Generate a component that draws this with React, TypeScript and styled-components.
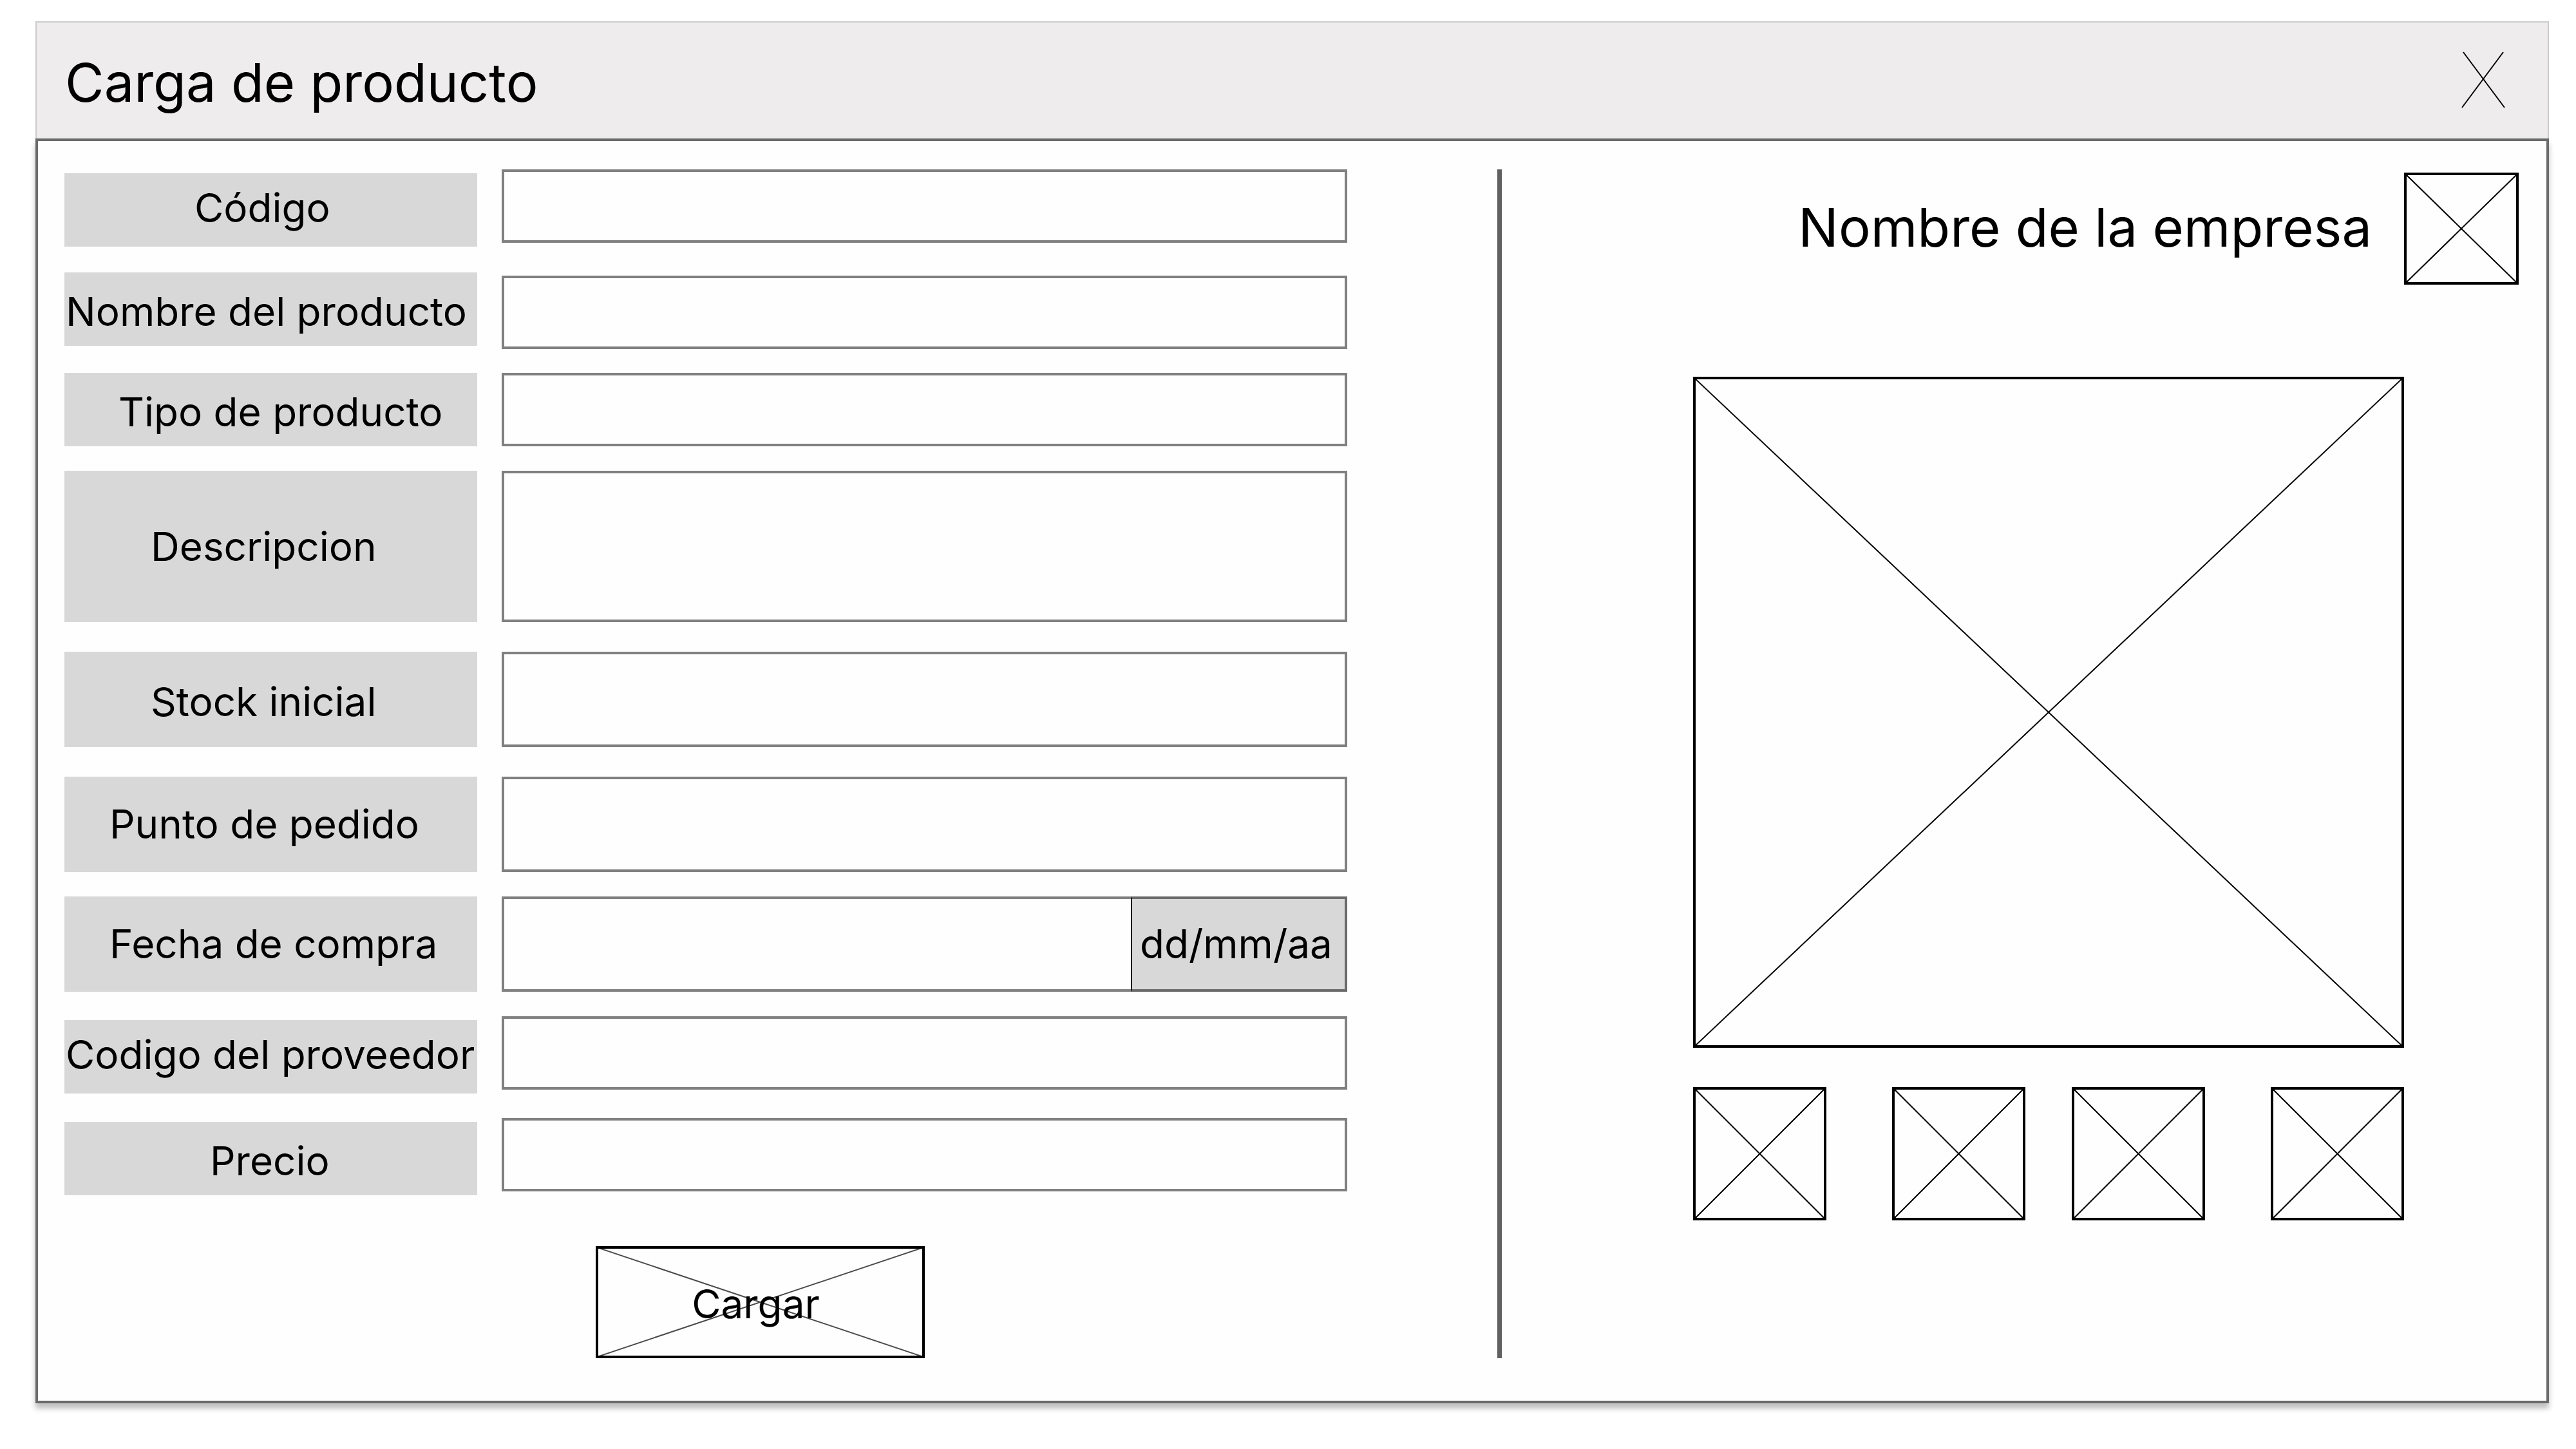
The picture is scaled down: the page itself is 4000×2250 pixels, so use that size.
import React from "react";
import styled, { createGlobalStyle } from "styled-components";

const GlobalStyle = createGlobalStyle`
  *, *::before, *::after { box-sizing: border-box; }
  body {
    margin: 0;
    background: #fff;
    color: #000;
    font-family: Inter, "Liberation Sans", sans-serif;
    font-size: 62px;
    line-height: 76px;
  }
`;

const Page = styled.div`
  padding: 33px 42px 71px 55px;
`;

const TitleBar = styled.header`
  display: flex;
  align-items: center;
  justify-content: space-between;
  height: 182px;
  padding: 6px 64px 0 44px;
  background: #eeecec;
  border: 2px solid #cccccc;
  border-bottom: 0;
`;

const Title = styled.h1`
  margin: 0;
  font-size: 83px;
  line-height: 102px;
  font-weight: 400;
`;

const CloseButton = styled.button`
  display: flex;
  padding: 0 2px 8px;
  border: 0;
  background: none;
  cursor: pointer;
`;

const Body = styled.main`
  display: grid;
  grid-template-columns: minmax(0, 2225fr) 7px minmax(0, 1579fr);
  padding: 44px 43px 66px 41px;
  background: #fefefe;
  border: 4px solid #6b6b6b;
  box-shadow: 0 8px 8px rgba(0, 0, 0, 0.25);
`;

const Divider = styled.div`
  background: #606060;
`;

const Form = styled.form`
  display: flex;
  flex-direction: column;
  padding-right: 233px;
`;

type Shift = "label" | "field" | "none";
type Align = "high" | "middle" | "low";

const Row = styled.div<{ $height: number; $gap: number; $shift: Shift }>`
  display: grid;
  grid-template-columns: 641px minmax(0, 1fr);
  grid-template-rows: ${(p) => p.$height}px;
  column-gap: 38px;
  margin-bottom: ${(p) => p.$gap}px;

  & > :first-child {
    margin-top: ${(p) => (p.$shift === "label" ? 6 : 0)}px;
    margin-bottom: ${(p) => (p.$shift === "label" ? -6 : 0)}px;
  }
  & > :last-child {
    margin-top: ${(p) => (p.$shift === "field" ? 5 : 0)}px;
    margin-bottom: ${(p) => (p.$shift === "field" ? -5 : 0)}px;
  }
`;

const Label = styled.label<{ $indent: number; $align: Align }>`
  display: flex;
  align-items: center;
  padding-left: ${(p) => p.$indent}px;
  padding-top: ${(p) => (p.$align === "low" ? 8 : 0)}px;
  padding-bottom: ${(p) => (p.$align === "high" ? 6 : 0)}px;
  background: #d8d8d8;
  white-space: nowrap;
`;

const Field = styled.div`
  display: flex;
`;

const Input = styled.input<{ $joined?: boolean }>`
  flex: 1;
  min-width: 0;
  height: 100%;
  margin: 0;
  padding: 0 24px;
  border: 4px solid #808080;
  border-right-width: ${(p) => (p.$joined ? 0 : 4)}px;
  border-radius: 0;
  background: #fefefe;
  font: inherit;
`;

const TextArea = styled.textarea`
  flex: 1;
  min-width: 0;
  height: 100%;
  margin: 0;
  padding: 16px 24px;
  border: 4px solid #808080;
  border-radius: 0;
  background: #fefefe;
  font: inherit;
  resize: none;
`;

const Format = styled.span`
  display: flex;
  align-items: center;
  width: 336px;
  padding-left: 12px;
  background: #d8d8d8;
  border: 4px solid #6b6b6b;
  border-left: 2px solid #000;
`;

const SubmitButton = styled.button`
  position: relative;
  width: 511px;
  height: 174px;
  margin: 41px 0 0 825px;
  padding: 6px 14px 0 0;
  border: 4px solid #000;
  background: #fefefe;
  color: #000;
  font: inherit;
  cursor: pointer;
`;

const Aside = styled.aside`
  padding-top: 5px;
`;

const Company = styled.div`
  display: flex;
  align-items: center;
  justify-content: flex-end;
  gap: 50px;
  font-size: 83px;
  line-height: 102px;
`;

const CompanyName = styled.span`
  padding-bottom: 4px;
`;

const Picture = styled.div<{ $width?: string; $ratio: string }>`
  position: relative;
  flex-shrink: 0;
  width: ${(p) => p.$width ?? "100%"};
  aspect-ratio: ${(p) => p.$ratio};
  border: 4px solid #000;
`;

const CrossSvg = styled.svg<{ $faint?: boolean }>`
  position: absolute;
  inset: -2px;
  width: calc(100% + 4px);
  height: calc(100% + 4px);
  stroke: #000;
  stroke-width: 2px;
  opacity: ${(p) => (p.$faint ? 0.7 : 1)};
  pointer-events: none;
`;

const Gallery = styled.div`
  display: flex;
  flex-direction: column;
  gap: 61px;
  padding: 143px 178px 0 297px;
`;

const Thumbs = styled.div`
  display: flex;
  justify-content: space-between;
`;

const Pair = styled.div`
  display: flex;
  gap: 102px;
`;

const Cross = ({ faint }: { faint?: boolean }) => (
  <CrossSvg aria-hidden="true" $faint={faint}>
    <line x1="0" y1="0" x2="100%" y2="100%" />
    <line x1="100%" y1="0" x2="0" y2="100%" />
  </CrossSvg>
);

interface Item {
  id: string;
  text: string;
  height: number;
  gap: number;
  indent: number;
  align: Align;
  shift: Shift;
  kind?: "area" | "date";
}

const items: Item[] = [
  { id: "codigo", text: "Código", height: 114, gap: 46, indent: 202, align: "high", shift: "label" },
  { id: "nombre", text: "Nombre del producto", height: 114, gap: 42, indent: 2, align: "low", shift: "field" },
  { id: "tipo", text: "Tipo de producto", height: 114, gap: 38, indent: 84, align: "low", shift: "none" },
  { id: "descripcion", text: "Descripcion", height: 235, gap: 46, indent: 134, align: "middle", shift: "none", kind: "area" },
  { id: "stock", text: "Stock inicial", height: 148, gap: 46, indent: 134, align: "low", shift: "none" },
  { id: "punto", text: "Punto de pedido", height: 148, gap: 38, indent: 70, align: "middle", shift: "none" },
  { id: "fecha", text: "Fecha de compra", height: 148, gap: 38, indent: 70, align: "middle", shift: "none", kind: "date" },
  { id: "proveedor", text: "Codigo del proveedor", height: 114, gap: 44, indent: 2, align: "high", shift: "label" },
  { id: "precio", text: "Precio", height: 114, gap: 44, indent: 226, align: "low", shift: "label" },
];

export default function App() {
  return (
    <>
      <GlobalStyle />
      <Page>
        <TitleBar>
          <Title>Carga de producto</Title>
          <CloseButton type="button" aria-label="Cerrar">
            <svg width="68" height="88" viewBox="0 0 68 88" fill="none" stroke="#000" strokeWidth="2">
              <path d="M3 1L67 87M65 1L1 87" />
            </svg>
          </CloseButton>
        </TitleBar>
        <Body>
          <Form onSubmit={(e) => e.preventDefault()}>
            {items.map((item) => (
              <Row key={item.id} $height={item.height} $gap={item.gap} $shift={item.shift}>
                <Label htmlFor={item.id} $indent={item.indent} $align={item.align}>
                  {item.text}
                </Label>
                <Field>
                  {item.kind === "area" ? (
                    <TextArea id={item.id} />
                  ) : (
                    <Input id={item.id} type="text" $joined={item.kind === "date"} />
                  )}
                  {item.kind === "date" && <Format>dd/mm/aa</Format>}
                </Field>
              </Row>
            ))}
            <SubmitButton type="submit">
              Cargar
              <Cross faint />
            </SubmitButton>
          </Form>
          <Divider />
          <Aside>
            <Company>
              <CompanyName>Nombre de la empresa</CompanyName>
              <Picture $width="178px" $ratio="178 / 174">
                <Cross />
              </Picture>
            </Company>
            <Gallery>
              <Picture $ratio="1104 / 1042">
                <Cross />
              </Picture>
              <Thumbs>
                {[0, 1].map((pair) => (
                  <Pair key={pair}>
                    <Picture $width="207px" $ratio="1">
                      <Cross />
                    </Picture>
                    <Picture $width="207px" $ratio="1">
                      <Cross />
                    </Picture>
                  </Pair>
                ))}
              </Thumbs>
            </Gallery>
          </Aside>
        </Body>
      </Page>
    </>
  );
}
